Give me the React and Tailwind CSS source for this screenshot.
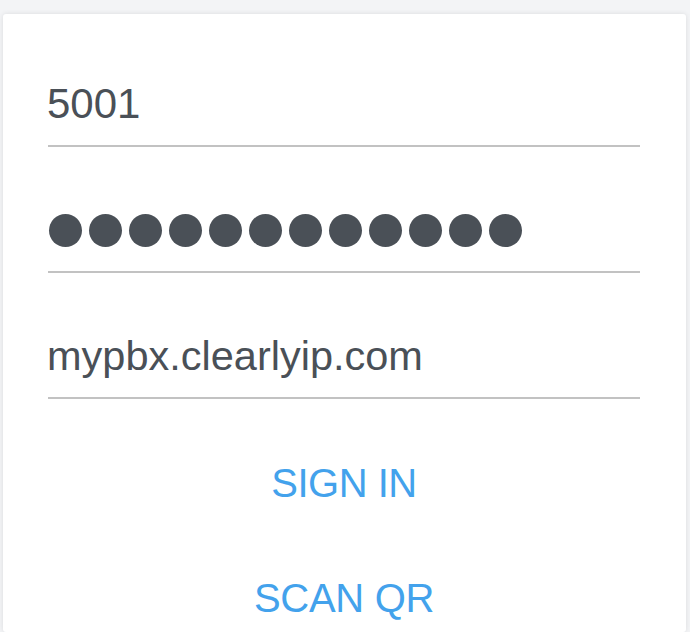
export default function App() {
  const dots = Array.from({ length: 12 });
  return (
    <div className="min-h-[632px] h-[632px] overflow-hidden bg-[#f3f4f6] pt-[14px] pl-[3px] pr-[4px] font-['Liberation_Sans',Arial,sans-serif]">
      <div className="h-full bg-white rounded-[3px] shadow-[0_0_5px_rgba(0,0,0,0.10)] pl-[45px] pr-[46px] pt-[69px]">
        <div className="border-b-2 border-[#c2c2c2] pb-[20px]">
          <div className="text-[42px] leading-[42px] text-[#4a5057] -ml-[1px]">5001</div>
        </div>
        <div className="border-b-2 border-[#c2c2c2] pb-[20px] mt-[62px]">
          <div className="h-[42px] flex items-center gap-[7px] pl-[1px]">
            {dots.map((_, i) => (
              <span key={i} className="block w-[33px] h-[33px] rounded-full bg-[#4a5057]" />
            ))}
          </div>
        </div>
        <div className="border-b-2 border-[#c2c2c2] pb-[20px] mt-[62px]">
          <div className="text-[41.5px] leading-[42px] text-[#4a5057] -ml-[1px]">mypbx.clearlyip.com</div>
        </div>
        <div className="mt-[64px] flex flex-col items-center gap-[75px]">
          <div className="text-[40px] leading-[40px] text-[#43a2ec] tracking-[-0.5px]">SIGN IN</div>
          <div className="text-[40px] leading-[40px] text-[#43a2ec] tracking-[-0.3px]">SCAN QR</div>
        </div>
      </div>
    </div>
  );
}
